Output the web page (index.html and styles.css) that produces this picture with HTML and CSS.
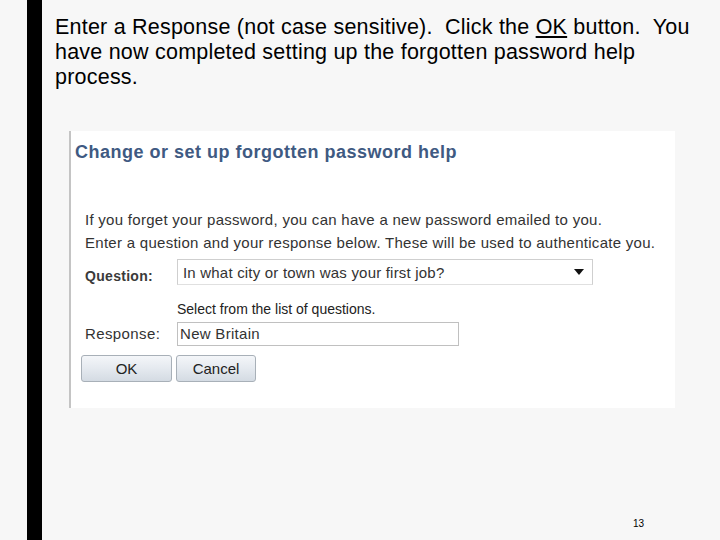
FILE: index.html
```html
<!DOCTYPE html>
<html>
<head>
<meta charset="utf-8">
<link rel="stylesheet" href="styles.css">
</head>
<body>
<div class="bar"></div>
<div class="main">
  <p class="intro"><span class="line">Enter a Response (not case sensitive).&nbsp; Click the <u>OK</u> button.&nbsp; You</span><span class="line">have now completed setting up the forgotten password help</span><span class="line">process.</span></p>
  <div class="panel">
    <h1 class="title">Change or set up forgotten password help</h1>
    <p class="info">If you forget your password, you can have a new password emailed to you.<br>Enter a question and your response below. These will be used to authenticate you.</p>
    <div class="form">
      <div class="label label-q">Question:</div>
      <div class="select"><span>In what city or town was your first job?</span><svg class="arrow" width="10" height="6" viewBox="0 0 10 6"><path d="M0 0H10L5 6Z" fill="#111"/></svg></div>
      <div></div>
      <div class="hint">Select from the list of questions.</div>
      <div class="label label-r">Response:</div>
      <div class="input">New Britain</div>
    </div>
    <div class="buttons">
      <div class="btn btn-ok">OK</div>
      <div class="btn btn-cancel">Cancel</div>
    </div>
  </div>
  <div class="footer">13</div>
</div>
</body>
</html>
```
FILE: styles.css
```css
html, body {
  margin: 0;
  padding: 0;
}
body {
  width: 720px;
  height: 540px;
  background: #f7f7f7;
  display: flex;
  font-family: "Liberation Sans", Arial, sans-serif;
  overflow: hidden;
}
.bar {
  width: 15px;
  margin-left: 27px;
  background: #000;
  flex: none;
}
.main {
  flex: 1;
  display: flex;
  flex-direction: column;
  padding: 15px 0 0 13px;
}
.intro {
  margin: 0;
  font-size: 21.5px;
  line-height: 25px;
  letter-spacing: 0.22px;
  color: #000;
  width: 660px;
}
.line {
  display: block;
  white-space: nowrap;
}
.panel {
  margin: 41px 0 0 14px;
  width: 606px;
  height: 277px;
  box-sizing: border-box;
  border-left: 2px solid #c4c4c4;
  background: #fff;
  padding: 11px 0 0 4px;
}
.title {
  margin: 0;
  font-size: 18px;
  line-height: 20px;
  letter-spacing: 0.5px;
  font-weight: bold;
  color: #3f5a82;
}
.info {
  margin: 46px 0 0 10px;
  font-size: 15px;
  line-height: 23px;
  letter-spacing: 0.28px;
  color: #333;
}
.form {
  margin: 5px 0 0 10px;
  display: grid;
  grid-template-columns: 92px 416px;
  row-gap: 0;
}
.label {
  font-size: 15px;
  color: #333;
  letter-spacing: 0.4px;
}
.label-q {
  font-weight: bold;
  font-size: 14px;
  letter-spacing: 0.3px;
  padding-top: 9px;
  color: #3a3a3a;
}
.label-r {
  padding-top: 8px;
}
.select {
  height: 26px;
  box-sizing: border-box;
  border: 1px solid #cfcfcf;
  border-bottom-color: #e0e0e0;
  display: flex;
  align-items: center;
  justify-content: space-between;
  padding: 0 8px 0 5px;
  font-size: 15px;
  letter-spacing: 0.2px;
  color: #333;
}
.hint {
  margin-top: 16px;
  font-size: 14px;
  line-height: 16px;
  color: #222;
}
.input {
  margin-top: 5px;
  width: 282px;
  height: 24px;
  box-sizing: border-box;
  border: 1px solid #c0c0c0;
  padding: 2px 0 0 2px;
  font-size: 15px;
  line-height: 18px;
  letter-spacing: 0.3px;
  color: #333;
}
.buttons {
  margin: 9px 0 0 6px;
  display: flex;
  gap: 4px;
}
.btn {
  height: 27px;
  box-sizing: border-box;
  border: 1px solid #a8b0b8;
  border-radius: 3px;
  background: linear-gradient(#f4f6f9, #e3e8ee 55%, #d4dbe3);
  font-size: 15px;
  line-height: 25px;
  text-align: center;
  color: #222;
}
.btn-ok {
  width: 91px;
}
.btn-cancel {
  width: 80px;
}
.footer {
  margin: auto 0 0 0;
  padding: 0 0 10px 578px;
  font-size: 10px;
  line-height: 12px;
  color: #000;
}
```
